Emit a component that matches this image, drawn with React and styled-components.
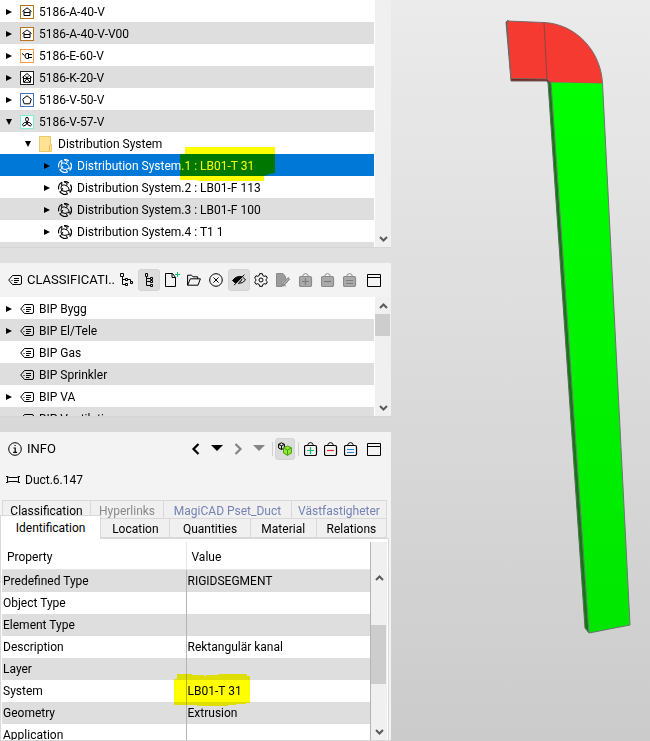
import styled, { createGlobalStyle, css } from 'styled-components';

const projects = [
    { label: '5186-A-40-V', icon: 'house' },
    { label: '5186-A-40-V-V00', icon: 'house' },
    { label: '5186-E-60-V', icon: 'plug' },
    { label: '5186-K-20-V', icon: 'structure' },
    { label: '5186-V-50-V', icon: 'pentagon' },
    { label: '5186-V-57-V', icon: 'fan', open: true },
    { label: 'Distribution System', icon: 'folder', depth: 1, open: true },
    { label: 'Distribution System.1 : LB01-T 31', icon: 'system', depth: 2, selected: true },
    { label: 'Distribution System.2 : LB01-F 113', icon: 'system', depth: 2 },
    { label: 'Distribution System.3 : LB01-F 100', icon: 'system', depth: 2 },
    { label: 'Distribution System.4 : T1 1', icon: 'system', depth: 2 },
    { label: 'Distribution System.5', icon: 'system', depth: 2 },
];

const classifications = [
    { label: 'BIP Bygg', icon: 'tag' },
    { label: 'BIP El/Tele', icon: 'tag' },
    { label: 'BIP Gas', icon: 'tag', leaf: true },
    { label: 'BIP Sprinkler', icon: 'tag', leaf: true },
    { label: 'BIP VA', icon: 'tag' },
    { label: 'BIP Ventilation', icon: 'tag', leaf: true },
];

const properties = [
    ['Predefined Type', 'RIGIDSEGMENT'],
    ['Object Type', ''],
    ['Element Type', ''],
    ['Description', 'Rektangulär kanal'],
    ['Layer', ''],
    ['System', 'LB01-T 31'],
    ['Geometry', 'Extrusion'],
    ['Application', ''],
];

const Icon = styled.svg`
    flex: none;
    width: 14px;
    height: 14px;
    fill: none;
    stroke: #000;
`;

const Framed = ({ color, children }) => <Icon viewBox="0 0 14 14">
    <rect x="0.5" y="0.5" width="13" height="13" fill="#fff" stroke={color} />
    {children}
</Icon>;

const Bag = ({ color, fill = 'none', stroke = '#000', sign }) => <Icon viewBox="0 0 14 14">
    <rect x="0.5" y="3.5" width="12" height="10" rx="1.5" fill={fill} stroke={stroke} strokeWidth="1.2" />
    <path d="M3.5 3.5Q4 0.6 6.5 0.6T9.5 3.5" stroke={stroke} />
    <path d={sign} stroke={color} strokeWidth="1.2" />
</Icon>;

const PLUS = 'M3 8.5H10M6.5 5V12';
const MINUS = 'M3 8.5H10';
const EQUAL = 'M3 7.5H10M3 10.5H10';

const icons = {
    house: <Framed color="#b8741a"><path d="M2.5 6.5L7 2.8L11.5 6.5M4 6V10.5H10V6M4 7.5H10" /></Framed>,
    plug: <Framed color="#ff9c45"><path d="M2 4.5L4.5 6.5M8.5 4.5H7Q5 4.5 5 7T7 9.5H8.5ZM9 5.5H12M9 8.5H12" /></Framed>,
    structure: <Framed color="#222"><path d="M2.3 6.5L7 2.5L11.7 6.5M3.5 6V11.3H10.5V6M3.5 7.5H10.5M4 11L7 7.8L10 11M5.5 5.5L9 8M8.5 5.5L5 8" /></Framed>,
    pentagon: <Framed color="#3f76c8"><path d="M7 2.8L11.3 6.2L9.8 10.8H4.2L2.7 6.2Z" /></Framed>,
    fan: <Framed color="#83f0d3"><path d="M7 7.2Q4.6 4.8 6 2.6Q7 1.9 8 2.6Q9.4 4.8 7 7.2ZM7 7.2Q7 10.4 3.7 11Q2.4 10.6 2.6 9.3Q3.8 7 7 7.2ZM7 7.2Q7 10.4 10.3 11Q11.6 10.6 11.4 9.3Q10.2 7 7 7.2Z" /></Framed>,
    folder: <FolderIcon viewBox="0 0 14 16">
        <path d="M0.5 0.5H11.5V8.5H12.5V15.5H0.5Z" fill="#ffe394" stroke="#ecca66" />
        <path d="M10.5 15V9.5H11.5" stroke="#e2b955" />
    </FolderIcon>,
    system: <Icon viewBox="0 0 14 14">
        <path d="M4 1.3A6.4 6.4 0 0 0 0.7 8.3M1.6 10.4A6.4 6.4 0 0 0 9.6 12.9M11.6 11.5A6.4 6.4 0 0 0 12.4 3.6M10.8 1.9A6.4 6.4 0 0 0 6 0.7" strokeWidth="1.2" />
        <path d="M6 0.7L9.2 2.6L8.6 4.8M8.6 4.8Q6.2 3.2 3.6 4.4M8.6 4.8Q11.2 6.4 11.2 9.4M3.6 4.4Q2.2 7 3.8 9.6L2.2 10.6M3.8 9.6Q6.6 11.4 11.2 9.4L12.6 9M4 1.3L3.6 4.4M4.8 7Q4.4 8.4 3.8 9.6M9.6 12.9L8 10.4" />
    </Icon>,
    tag: <Icon viewBox="0 0 14 14">
        <path d="M4.5 2.5H12Q13.5 2.5 13.5 4V10Q13.5 11.5 12 11.5H4.5L0.7 7Z" />
        <path d="M6 5.5H11M6 7.5H11M6 9.5H9.5M3.5 7.5H4.5" />
    </Icon>,
    branch: <Icon viewBox="0 0 14 14">
        <path d="M2.5 3.5V11.5H5.5M2.5 6.5H5.5M8 6.5H10.5V8.5M0.5 0.5H3.5V3.5H0.5ZM5.5 5.5H7.5V7.5H5.5ZM5.5 10.5H7.5V12.5H5.5ZM10.5 8.5H12.5V10.5H10.5Z" />
    </Icon>,
    tree: <Icon viewBox="0 0 14 14">
        <path d="M4.5 3.5V12.5H8M4.5 5.5H8M4.5 8.5H8M3.5 0.5H5.5V3.5H3.5ZM8.5 4.5H10.5V6.5H8.5ZM8.5 7.5H10.5V9.5H8.5ZM8.5 11.5H10.5V13.5H8.5Z" />
    </Icon>,
    newFile: <Icon viewBox="0 0 14 14" overflow="visible">
        <path d="M7.5 0.5H0.5V13.5H10.5V4.5ZM7 0.5V4.5H10.5" />
        <path d="M10 1.5H15M12.5 -1V4" stroke="#10b96c" />
    </Icon>,
    openFile: <Icon viewBox="0 0 14 14">
        <path d="M0.6 12.2V2.2H4.6L6 3.8H10.7V5.8M0.6 12.2L3.3 5.8H13.4L11 12.2Z" />
    </Icon>,
    cancel: <Icon viewBox="0 0 14 14">
        <circle cx="7" cy="7" r="6.3" />
        <path d="M4.5 4.5L9.5 9.5M9.5 4.5L4.5 9.5" />
    </Icon>,
    eye: <Icon viewBox="0 0 14 14">
        <path d="M0.5 7.5Q3 3.6 7.5 3.4L10 3.8L4 10Q2 9.4 0.5 7.5Z" fill="#000" />
        <path d="M2 12.2L12.5 1.6M10.8 4.4Q12.6 5.4 13.5 7Q11 10.6 6 10.4M10 5.8Q9.5 8.5 7 9.3" />
    </Icon>,
    gear: <Icon viewBox="0 0 14 14">
        <path d="M5.6 0.7H8.4L8.8 2.5L10.2 3.3L12 2.8L13.4 5.1L12.1 6.3V7.7L13.4 8.9L12 11.2L10.2 10.7L8.8 11.5L8.4 13.3H5.6L5.2 11.5L3.8 10.7L2 11.2L0.6 8.9L1.9 7.7V6.3L0.6 5.1L2 2.8L3.8 3.3L5.2 2.5Z" />
        <circle cx="7" cy="7" r="2" />
    </Icon>,
    edit: <Icon viewBox="0 0 14 14">
        <path d="M0.5 0.5H7L9.5 3.5V6L6 9.5V13.5H0.5Z" fill="#9b9b9b" stroke="#8b8b8b" />
        <path d="M6.5 12.8L7.2 9.8L12 4.6L13.5 6L9 11.4Z" fill="#b4b4b4" stroke="#757575" />
        <path d="M6.5 12.8H10" stroke="#8b8b8b" />
    </Icon>,
    bagAddOff: <Bag fill="#aaa" stroke="#8a8a8a" color="#7c7c7c" sign={PLUS} />,
    bagRemoveOff: <Bag fill="#aaa" stroke="#8a8a8a" color="#7c7c7c" sign={MINUS} />,
    bagEqualOff: <Bag fill="#aaa" stroke="#8a8a8a" color="#7c7c7c" sign={EQUAL} />,
    bagAdd: <Bag color="#10b96c" sign={PLUS} />,
    bagRemove: <Bag color="#e0262d" sign={MINUS} />,
    bagEqual: <Bag color="#1f83d6" sign={EQUAL} />,
    window: <Icon viewBox="0 0 14 14">
        <path d="M0.5 1.5H13.5V13.5H0.5ZM0.5 4.5H13.5" />
    </Icon>,
    info: <Icon viewBox="0 0 14 14">
        <circle cx="7" cy="7" r="6.3" />
        <path d="M5.5 6H7.2V10.2M5.2 10.4H9M6.5 3.5H7.7" strokeWidth="1.2" />
    </Icon>,
    duct: <Icon viewBox="0 0 14 14">
        <path d="M0 3.5H1.5L3 4.5H11L12.5 3.5H14M0 9.5H1.5L3 8.5H11L12.5 9.5H14M1.5 3.5V9.5M12.5 3.5V9.5" />
    </Icon>,
    cubes: <Icon viewBox="0 0 14 14">
        <path d="M0.6 2.3L3.5 0.8L6.4 2.3V6L3.5 7.5L0.6 6ZM0.6 2.3L3.5 3.8L6.4 2.3M3.5 3.8V7.5" />
        <path d="M5.5 5.8L9.5 4L13.4 5.8V11L9.5 13.3L5.5 11Z" fill="#8eea35" stroke="#4a9d0b" />
        <path d="M5.5 5.8L9.5 8L13.4 5.8M9.5 8V13.3" stroke="#4a9d0b" />
    </Icon>,
    back: <Icon viewBox="0 0 14 14"><path d="M9.5 2L4.5 7L9.5 12" strokeWidth="2.2" /></Icon>,
    forward: <Icon viewBox="0 0 14 14"><path d="M4.5 2L9.5 7L4.5 12" stroke="#858585" strokeWidth="2.2" /></Icon>,
    caret: <Icon viewBox="0 0 14 14"><path d="M1 3H13L7 9Z" fill="#000" stroke="none" /></Icon>,
    caretOff: <Icon viewBox="0 0 14 14"><path d="M1 3H13L7 9Z" fill="#858585" stroke="none" /></Icon>,
};

function FolderIcon({ children }) {
    return <svg width="14" height="16" viewBox="0 0 14 16" fill="none">{children}</svg>;
}

const ToolButton = ({ icon, label, active, disabled }) => (
    <Tool type="button" aria-label={label} $active={active} disabled={disabled}>{icons[icon]}</Tool>
);

const TreeItem = ({ label, icon, depth = 0, open, leaf, selected }) => <TreeRow $depth={depth} $selected={selected}>
    <Toggle type="button" aria-label={`Toggle ${label}`} $hidden={leaf}>
        <svg width="6" height="6" viewBox="0 0 6 6">
            <path d={open ? 'M0 0H6L3 6Z' : 'M0 0L6 3L0 6Z'} />
        </svg>
    </Toggle>
    {icons[icon]}
    <span>{label}</span>
    {selected && <Marker width="96" height="36" $left={180} $top={-7} viewBox="0 0 96 36">
        <path d="M5 0H95V26L90 27L84 29V34H18V33H0V7H5Z" />
    </Marker>}
</TreeRow>;

const Scrollbar = ({ thumb, top, size, noUp }) => <Track>
    <svg width="9" height="6" viewBox="0 0 9 6">{!noUp && <path d="M1 5L4.5 1.5L8 5" />}</svg>
    {thumb && <Thumb $top={top} $size={size} />}
    <svg width="9" height="6" viewBox="0 0 9 6"><path d="M1 1L4.5 4.5L8 1" /></svg>
</Track>;

export default function App() {
    return <>
        <GlobalStyle />
        <Page>
            <Sidebar>
                <Panel>
                    <ListArea>
                        <TreeList>
                            {projects.map(item => <TreeItem key={item.label} {...item} />)}
                        </TreeList>
                        <Scrollbar noUp />
                    </ListArea>
                </Panel>

                <Panel>
                    <PanelHeader>
                        {icons.tag}
                        <Title>CLASSIFICATI..</Title>
                        <ToolButton icon="branch" label="Show branches" />
                        <ToolButton icon="tree" label="Show tree" active />
                        <Spacer />
                        <ToolButton icon="newFile" label="New classification" />
                        <ToolButton icon="openFile" label="Open classification" />
                        <ToolButton icon="cancel" label="Close classification" />
                        <Spacer />
                        <ToolButton icon="eye" label="Hide empty" active />
                        <ToolButton icon="gear" label="Settings" />
                        <ToolButton icon="edit" label="Edit" disabled />
                        <Spacer />
                        <ToolButton icon="bagAddOff" label="Add to selection" disabled />
                        <ToolButton icon="bagRemoveOff" label="Remove from selection" disabled />
                        <ToolButton icon="bagEqualOff" label="Set selection" disabled />
                        <Spacer />
                        <Spacer />
                        <ToolButton icon="window" label="Maximize classification" />
                    </PanelHeader>
                    <ListArea>
                        <TreeList>
                            {classifications.map(item => <TreeItem key={item.label} {...item} />)}
                        </TreeList>
                        <Scrollbar thumb top="0%" size="26%" />
                    </ListArea>
                </Panel>

                <Panel>
                    <PanelHeader>
                        {icons.info}
                        <Title>INFO</Title>
                        <ToolGroup $size={21}>
                            <ToolButton icon="back" label="Back" />
                            <ToolButton icon="caret" label="Back history" />
                            <ToolButton icon="forward" label="Forward" disabled />
                            <ToolButton icon="caretOff" label="Forward history" disabled />
                        </ToolGroup>
                        <Divider />
                        <ToolGroup $size={20}>
                            <ToolButton icon="cubes" label="Follow selection" active />
                        </ToolGroup>
                        <Divider />
                        <ToolGroup $size={20}>
                            <ToolButton icon="bagAdd" label="Add to basket" />
                            <ToolButton icon="bagRemove" label="Remove from basket" />
                            <ToolButton icon="bagEqual" label="Set basket" />
                        </ToolGroup>
                        <ToolButton icon="window" label="Maximize info" />
                    </PanelHeader>
                    <ObjectName>{icons.duct}Duct.6.147</ObjectName>
                    <BackTabs>
                        <Tab type="button">Classification</Tab>
                        <Tab type="button" $color="#8a8a8a">Hyperlinks</Tab>
                        <Tab type="button" $color="#7482b4">MagiCAD Pset_Duct</Tab>
                        <Tab type="button" $color="#7482b4">Västfastigheter</Tab>
                    </BackTabs>
                    <FrontTabs>
                        <Tab type="button" $current>Identification</Tab>
                        <Tab type="button">Location</Tab>
                        <Tab type="button">Quantities</Tab>
                        <Tab type="button">Material</Tab>
                        <Tab type="button">Relations</Tab>
                    </FrontTabs>
                    <PropertyPane>
                        <TableClip>
                            <PropertyTable>
                                <thead>
                                    <tr><th>Property</th><th>Value</th></tr>
                                </thead>
                                <tbody>
                                    {properties.map(([name, value]) => <tr key={name}>
                                        <td>{name}</td>
                                        <td>
                                            {value}
                                            {name === 'System' && <Marker width="76" height="32" $left={-13} $top={-6} viewBox="0 0 76 32">
                                                <path d="M3 0H18V1H30V2H32V1H44V0H73V2H76V29H72V30H62V31H54V32H23V31H0V5H3Z" />
                                            </Marker>}
                                        </td>
                                    </tr>)}
                                </tbody>
                            </PropertyTable>
                        </TableClip>
                        <TableScroll>
                            <Scrollbar thumb top="28%" size="43%" />
                        </TableScroll>
                    </PropertyPane>
                </Panel>
            </Sidebar>

            <Viewport>
                <svg width="100%" height="100%" viewBox="391 0 259 741" preserveAspectRatio="xMidYMin meet">
                    <defs>
                        <linearGradient id="duct" x1="0" y1="0" x2="0" y2="1">
                            <stop offset="0" stopColor="#00ff00" />
                            <stop offset="1" stopColor="#00e600" />
                        </linearGradient>
                    </defs>
                    <path d="M506 22L508 20L512 78L548 78L551 83L548 83L547 81H511Z" fill="#7e1a16" stroke="#6d6361" />
                    <path d="M507 21L544 22.5C576 24 601 51 602.5 83.5L551 82.5L547 79L511 78.5Z" fill="#f53a31" stroke="#7a6a67" />
                    <path d="M544 22.5L547 79" fill="none" stroke="#8a4540" />
                    <path d="M548 82L551 82L589 633L585 628Z" fill="#0a7d0a" stroke="#5c665c" />
                    <path d="M551 82.5L602.5 83.5L630 625L589 633Z" fill="url(#duct)" />
                    <path d="M551 82.5L589 633L630 625L602.5 83.5" fill="none" stroke="#687868" />
                </svg>
            </Viewport>
        </Page>
    </>;
}

const GlobalStyle = createGlobalStyle`
    * {
        box-sizing: border-box;
    }

    body {
        margin: 0;
        color: #000;
        font-family: Roboto, "Open Sans", sans-serif;
        font-size: 12px;
        line-height: 22px;
    }

    button {
        font: inherit;
        color: inherit;
        border: none;
        background: none;
        padding: 0;
    }
`;

const Page = styled.div`
    display: grid;
    grid-template-columns: minmax(0, 391fr) minmax(0, 259fr);
    height: 100vh;
    background: linear-gradient(#ebebeb, #cbcbcb);
`;

const Sidebar = styled.aside`
    display: grid;
    grid-template-rows: minmax(0, 248fr) minmax(0, 154fr) minmax(0, 309fr);
    gap: 15px;
    min-height: 0;
`;

const Panel = styled.section`
    display: flex;
    flex-direction: column;
    min-width: 0;
    overflow: hidden;
    background: #f3f3f3;
    border-bottom: 1px solid #d6d6d6;
`;

const PanelHeader = styled.header`
    display: flex;
    align-items: center;
    flex: none;
    height: 34px;
    padding: 0 6px 0 8px;
`;

const Title = styled.h2`
    flex: 1;
    min-width: 0;
    margin: 0 0 0 5px;
    font-size: 13px;
    font-weight: 400;
    white-space: nowrap;
`;

const Tool = styled.button`
    display: flex;
    align-items: center;
    justify-content: center;
    flex: none;
    width: 22px;
    height: 22px;
    border-radius: 3px;

    ${({ $active }) => $active && css`
        border: 1px solid #d4d4d4;
        background: #dcdcdc;
    `}
`;

const Spacer = styled.span`
    flex: none;
    width: 1px;
`;

const Divider = styled.span`
    flex: none;
    width: 1px;
    height: 14px;
    margin: 0 2px 0 1px;
    background: #d0d0d0;
`;

const ToolGroup = styled.div`
    display: flex;
    margin-right: 2px;

    ${Tool} {
        width: ${({ $size }) => $size}px;
    }
`;

const ListArea = styled.div`
    display: flex;
    flex: 1;
    min-height: 0;
    background: #fff;
`;

const TreeList = styled.ul`
    flex: 1;
    min-width: 0;
    margin: 0 1px 0 0;
    padding: 0;
    overflow: hidden;
    list-style: none;
`;

const TreeRow = styled.li`
    position: relative;
    display: flex;
    align-items: center;
    gap: 5px;
    height: 22px;
    padding: 2px 0 0 ${({ $depth }) => 3 + $depth * 19}px;
    white-space: nowrap;

    &:nth-child(even) {
        background: #dedede;
    }

    ${({ $selected }) => $selected && css`
        &:nth-child(n) {
            background: #0078d7;
            color: #fff;
        }

        ${Icon} {
            stroke: #fff;
        }
    `}
`;

const Toggle = styled.button`
    display: flex;
    align-items: center;
    justify-content: center;
    width: 12px;
    height: 20px;
    visibility: ${({ $hidden }) => ($hidden ? 'hidden' : 'visible')};
`;

/* highlighter stroke lying over the text */
const Marker = styled.svg`
    position: absolute;
    left: ${({ $left }) => $left}px;
    top: ${({ $top }) => $top}px;
    fill: #ff0;
    mix-blend-mode: multiply;
    pointer-events: none;
`;

const Track = styled.div`
    display: flex;
    flex-direction: column;
    align-items: center;
    flex: none;
    width: 16px;
    height: 100%;
    padding: 6px 0 5px;
    background: #f0f0f0;

    svg {
        flex: none;
        fill: none;
        stroke: #5a5a5a;
        stroke-width: 2;
    }

    svg:last-child {
        margin-top: auto;
    }
`;

const Thumb = styled.div`
    position: relative;
    flex: 1;
    width: 100%;
    margin: 5px 0;

    &::after {
        content: '';
        position: absolute;
        top: ${({ $top }) => $top};
        left: 0;
        width: 15px;
        height: ${({ $size }) => $size};
        background: #cdcdcd;
    }
`;

const ObjectName = styled.div`
    display: flex;
    align-items: center;
    gap: 5px;
    flex: none;
    height: 34px;
    padding: 0 6px 6px;
`;

const Tab = styled.button`
    min-width: 0;
    height: 20px;
    border: 1px solid #d9d9d9;
    border-left: none;
    background: #f0f0f0;
    color: ${({ $color }) => $color || '#000'};
    line-height: 20px;
    white-space: nowrap;

    ${({ $current }) => $current && css`
        height: 24px;
        margin-top: -3px;
        border-bottom: none;
        border-left: 1px solid #d9d9d9;
        background: #fff;
        z-index: 1;
    `}
`;

const BackTabs = styled.div`
    display: grid;
    grid-template-columns: 88fr 73fr 128fr 95fr;
    flex: none;
    height: 18px;
    margin: 0 4px 0 2px;
    border-left: 1px solid #d9d9d9;
`;

const FrontTabs = styled.div`
    display: grid;
    grid-template-columns: 101fr 69fr 80fr 66fr 70fr;
    flex: none;
    height: 20px;
    margin-right: 4px;
`;

const PropertyPane = styled.div`
    display: flex;
    flex: 1;
    min-height: 0;
    margin-right: 2px;
    padding: 3px 1px 0;
    border: 1px solid #d9d9d9;
    border-bottom: none;
    background: #fff;
`;

const TableClip = styled.div`
    flex: 1;
    min-width: 0;
    overflow: hidden;
    border-right: 1px solid #b4b4b4;
`;

const PropertyTable = styled.table`
    width: 100%;
    table-layout: fixed;
    border-collapse: collapse;
    text-align: left;

    th {
        height: 27px;
        padding: 4px 5px 0;
        border-bottom: 1px solid #e5e5e5;
        font-weight: 400;
    }

    th + th {
        border-left: 1px solid #e5e5e5;
    }

    td {
        position: relative;
        height: 22px;
        padding: 0 1px;
    }

    td + td {
        border-left: 1px solid #b4b4b4;
    }

    tbody tr:nth-child(odd) {
        background: #dedede;
    }
`;

const TableScroll = styled.div`
    flex: none;
    padding-top: 27px;
    background: #f0f0f0;
`;

const Viewport = styled.main`
    min-width: 0;
    min-height: 0;
    overflow: hidden;

    svg {
        display: block;
    }
`;
